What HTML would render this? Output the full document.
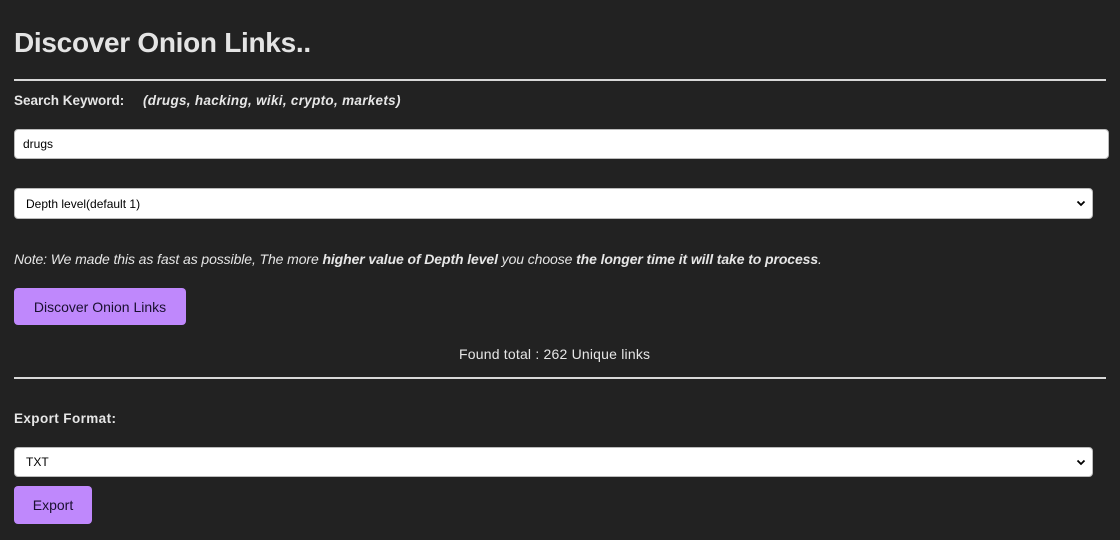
<!DOCTYPE html>
<html><head><style>
body{margin:0;width:1120px;height:540px;background:#222222;color:#e6e6e6;font-family:"Liberation Sans",sans-serif;position:relative;overflow:hidden}
.a{position:absolute;white-space:nowrap}
h1{position:absolute;left:14px;top:27px;margin:0;font-size:28px;font-weight:bold;color:#e4e4e4;letter-spacing:-0.3px}
.hr{position:absolute;left:14px;width:1092px;height:2px;background:#d8d8d8}
.box{position:absolute;left:14px;background:#fff;border:1px solid #bbb;border-radius:4px;box-sizing:border-box;color:#000;font-size:12px;padding-left:8px;display:flex;align-items:center}
.btn{position:absolute;left:14px;background:#bf88fc;border-radius:4px;color:#1a1030;font-size:14px;display:flex;align-items:center;justify-content:center}
.chev{position:absolute;right:6px;top:9px}
</style></head><body>
<h1>Discover Onion Links..</h1>
<div class="hr" style="top:79px"></div>
<div class="a" style="left:14px;top:93px;font-size:13.5px;font-weight:bold">Search Keyword:</div>
<div class="a" style="left:143px;top:93px;font-size:13.5px;font-weight:bold;font-style:italic;letter-spacing:0.3px">(drugs, hacking, wiki, crypto, markets)</div>
<div class="box" style="top:129px;width:1095px;height:30px">drugs</div>
<div class="box" style="top:188px;width:1079px;height:31px;padding-left:11px">Depth level(default 1)
<svg class="chev" width="10" height="10" viewBox="0 0 10 10"><path d="M1.5 3.5L5 7L8.5 3.5" stroke="#000" stroke-width="1.8" fill="none"/></svg></div>
<div class="a" style="left:14px;top:251px;font-size:14px;font-style:italic;letter-spacing:-0.1px">Note: We made this as fast as possible, The more <b>higher value of Depth level</b> you choose <b>the longer time it will take to process</b>.</div>
<div class="btn" style="top:288px;width:172px;height:37px">Discover Onion Links</div>
<div class="a" style="left:459px;top:346px;font-size:14px;letter-spacing:0.2px">Found total : 262 Unique links</div>
<div class="hr" style="top:377px"></div>
<div class="a" style="left:14px;top:411px;font-size:13.5px;font-weight:bold;letter-spacing:0.4px">Export Format:</div>
<div class="box" style="top:447px;width:1079px;height:30px;padding-left:11px">TXT
<svg class="chev" width="10" height="10" viewBox="0 0 10 10"><path d="M1.5 3.5L5 7L8.5 3.5" stroke="#000" stroke-width="1.8" fill="none"/></svg></div>
<div class="btn" style="top:486px;width:78px;height:38px">Export</div>
</body></html>
